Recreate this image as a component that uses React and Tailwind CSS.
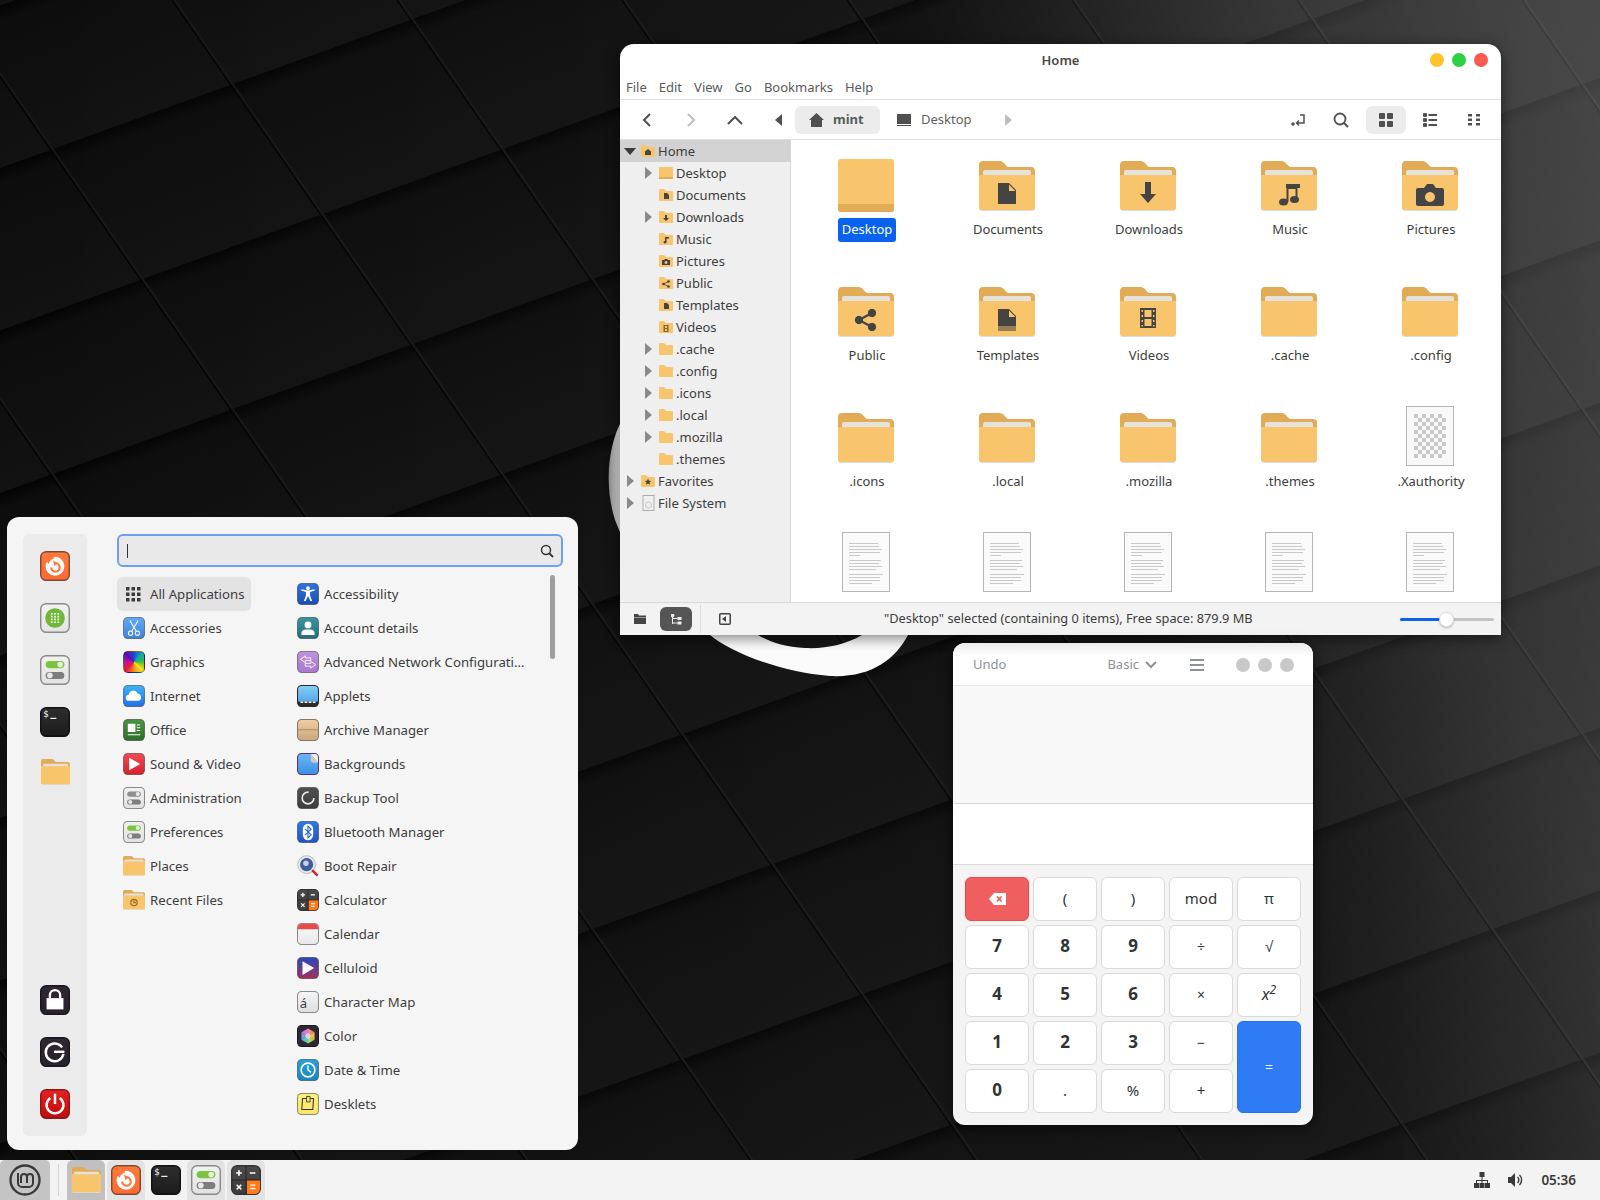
import React, { useId } from 'react';

const Tile = ({ s = 22, a, b, line = '#00000066', children }) => {
    const id = 'g' + useId().replace(/[^a-zA-Z0-9]/g, '');
    return (
        <svg width={s} height={s} viewBox="0 0 32 32" className="shrink-0">
            <defs>
                <linearGradient id={id} x1="0" y1="0" x2="0" y2="1">
                    <stop offset="0" stopColor={a} />
                    <stop offset="1" stopColor={b || a} />
                </linearGradient>
            </defs>
            <rect x="0.75" y="0.75" width="30.5" height="30.5" rx="6" fill={`url(#${id})`} stroke={line} strokeWidth="1.5" />
            {children}
        </svg>
    );
};

const FirefoxIcon = ({ s }) => (
    <Tile s={s} a="#ff7a3c" b="#ff6a30" line="#7a4a38">
        <path d="M16 6c5 0 10 4 10 10.500a10 10 0 1 1-20 0c0-2 .6-3.800 1.600-5.300.2 1.300.8 2.100 1.600 2.500C10 10 12.500 8.500 15 8.500c-1-.8-1-1.800 1-2.500z" fill="#fff" />
        <path d="M12 17.500a4.500 4.500 0 1 0 4.500-4.500" fill="none" stroke="#ff7a3c" strokeWidth="2.400" />
        <path d="M14 10l5 3-4 3z" fill="#ff7a3c" />
    </Tile>
);
const SoftwareIcon = ({ s }) => (
    <Tile s={s} a="#f2f2f2" b="#e4e4e4" line="#8a8a8a">
        <circle cx="16" cy="16" r="10.500" fill="#6fb83a" />
        {[11.500, 14.500, 17.500, 20.500].map((y) => [12.500, 16, 19.500].map((x) => <rect key={`${x}-${y}`} x={x - 0.9} y={y - 0.9} width="1.800" height="1.800" fill="#fff" />))}
    </Tile>
);
const ToggleIcon = ({ s, on = true }) => (
    <Tile s={s} a="#f2f2f2" b="#e2e2e2" line="#8a8a8a">
        <rect x="6" y="6.500" width="20" height="7.500" rx="3.750" fill={on ? '#7cc43f' : '#8f8f8f'} />
        <circle cx="21.500" cy="10.250" r="3" fill={on ? '#e4f5d4' : '#e8e8e8'} />
        <rect x="6" y="18" width="20" height="7.500" rx="3.750" fill="#7d7d7d" />
        <circle cx="10.500" cy="21.750" r="3" fill="#e8e8e8" />
    </Tile>
);
const TerminalIcon = ({ s }) => (
    <Tile s={s} a="#2e2e2e" b="#1c1c1c" line="#111">
        <text x="3.500" y="11" fontSize="9.500" fill="#fff" fontFamily="'DejaVu Sans Mono', monospace">$</text>
        <rect x="11" y="11.500" width="6.500" height="1.200" fill="#fff" />
    </Tile>
);
const LockIcon = ({ s }) => (
    <Tile s={s} a="#2e2833" b="#27222b" line="#1a171c">
        <rect x="7" y="14" width="18" height="12" fill="#fff" />
        <path d="M10.500 14v-3a5.500 5.500 0 0 1 11 0v3" fill="none" stroke="#fff" strokeWidth="2.400" />
    </Tile>
);
const LogoutIcon = ({ s }) => (
    <Tile s={s} a="#2e2833" b="#27222b" line="#1a171c">
        <path d="M23.500 11a9.500 9.500 0 1 0 1.500 7" fill="none" stroke="#fff" strokeWidth="2.600" />
        <rect x="15" y="14.500" width="11" height="2.600" fill="#fff" />
    </Tile>
);
const PowerIcon = ({ s }) => (
    <Tile s={s} a="#e62222" b="#bd0c0c" line="#8a1a1a">
        <path d="M11 9.500a9 9 0 1 0 10 0" fill="none" stroke="#fff" strokeWidth="2.600" />
        <rect x="14.700" y="5" width="2.600" height="11" fill="#fff" />
    </Tile>
);
const CalcIcon = ({ s }) => (
    <Tile s={s} a="#4a4a4a" b="#3c3c3c" line="#333">
        <path d="M31 16H17v15h8a6 6 0 0 0 6-6z" fill="#ff7a1c" />
        <path d="M16 1v30M1 16h30" stroke="#222" strokeWidth="1" />
        <path d="M5.500 8.500h6M8.500 5.500v6M20 8.500h6" stroke="#fff" strokeWidth="1.800" />
        <path d="M6 21l5 5M11 21l-5 5" stroke="#fff" strokeWidth="1.600" />
        <path d="M20.500 21.500h5.500M20.500 25h5.500" stroke="#fff" strokeWidth="1.500" />
    </Tile>
);
const GraphicsIcon = () => (
    <span className="w-[22px] h-[22px] shrink-0 rounded-[5px] border border-[#00000066] bg-[conic-gradient(#1a46d8,#10a8b0,#38c038,#f4e420,#f58a20,#e61e3c,#c80fa0,#5a10b0,#1a46d8)]" />
);
const ColorIcon = () => {
    const colors = ['#f58a7a', '#f5b84a', '#a8d860', '#60c8c0', '#7a98e8', '#d878d8'];
    return (
        <Tile a="#2e2833" line="#1a171c">
            {colors.map((c, i) => {
                const a0 = (i * Math.PI) / 3 - Math.PI / 2;
                const a1 = a0 + Math.PI / 3;
                return <path key={c} d={`M16 16L${16 + 11 * Math.cos(a0)} ${16 + 11 * Math.sin(a0)}L${16 + 11 * Math.cos(a1)} ${16 + 11 * Math.sin(a1)}Z`} fill={c} />;
            })}
            <circle cx="16" cy="16" r="4" fill="#f3e8f0" opacity="0.7" />
        </Tile>
    );
};

const FolderShape = ({ w = 56, children }) => (
    <svg width={w} height={w * (50 / 56)} viewBox="0 0 56 50" className="shrink-0">
        <path d="M0 4a4 4 0 0 1 4-4h17c3 0 5 4 8 6h23a4 4 0 0 1 4 4v20H0z" fill="#e2ab55" />
        <rect x="4" y="9" width="48" height="12" rx="2" fill="#e5e2dc" />
        <path d="M0 16a2 2 0 0 1 2-2h52a2 2 0 0 1 2 2v31a3 3 0 0 1-3 3H3a3 3 0 0 1-3-3z" fill="#dcdcdc" />
        <path d="M0 16a2 2 0 0 1 2-2h52a2 2 0 0 1 2 2v30a3 3 0 0 1-3 3H3a3 3 0 0 1-3-3z" fill="#f8c46c" />
        {children}
    </svg>
);

const Glyphs = {
    doc: <path d="M19 22h11l7 7v14H19z M30 23.500V30h6.500z" fill="#444" fillRule="evenodd" />,
    template: (
        <g>
            <path d="M19 22h11l7 7v10H19z M30 23.500V30h6.500z" fill="#444" fillRule="evenodd" />
            <path d="M19 39h18v5H19z" fill="#444" opacity="0.55" />
        </g>
    ),
    down: <path d="M25 21h6v12h5l-8 9-8-9h5z" fill="#444" />,
    music: (
        <g fill="#444">
            <path d="M25.500 24h13v2h-2v13h-2V28h-7v13h-2z" />
            <ellipse cx="22.500" cy="41" rx="4.500" ry="3.500" />
            <ellipse cx="33.500" cy="38.500" rx="4.500" ry="3.500" />
            <rect x="25" y="23" width="14" height="4" />
        </g>
    ),
    camera: <path d="M16 27h6l3-4h6l3 4h6a2 2 0 0 1 2 2v14a2 2 0 0 1-2 2H16a2 2 0 0 1-2-2V29a2 2 0 0 1 2-2z M28 31a5 5 0 1 0 .01 0z" fill="#444" fillRule="evenodd" />,
    share: (
        <g fill="#444" stroke="#444">
            <circle cx="21" cy="33" r="3.700" />
            <circle cx="34" cy="26" r="3.700" />
            <circle cx="34" cy="40" r="3.700" />
            <path d="M21 33l13-7M21 33l13 7" strokeWidth="2.200" />
        </g>
    ),
    film: <path d="M20 25h16v20H20z M21.500 27v2h1.500v-2z M21.500 32v2h1.500v-2z M21.500 37v2h1.500v-2z M21.500 42v1.500h1.500V42z M33 27v2h1.500v-2z M33 32v2h1.500v-2z M33 37v2h1.500v-2z M33 42v1.500h1.500V42z M24.500 27v7h7v-7z M24.500 36v7h7v-7z" fill="#444" fillRule="evenodd" transform="translate(0 -4)" />,
};

const DocIcon = () => {
    const rows = [[11, 29], [14, 30], [17, 33], [20, 31], [23, 11], [28, 32], [31, 30], [34, 33], [37, 27], [42, 34], [45, 31], [48, 31], [51, 23]];
    return (
        <svg width="48" height="60" viewBox="0 0 48 60" className="shrink-0">
            <rect x="0.500" y="0.500" width="47" height="59" fill="#fafafa" stroke="#b5b5b5" />
            {rows.map(([y, w]) => <rect key={y} x="7" y={y} width={w} height="0.700" fill="#b4b4b4" />)}
        </svg>
    );
};

const CheckerIcon = () => {
    const cells = [];
    for (let r = 0; r < 11; r++) for (let c = 0; c < 8; c++) if ((r + c) % 2 === 0) cells.push(<rect key={`${r}-${c}`} x={8 + c * 4} y={8 + r * 4} width="4" height="4" fill="#c8c8c8" />);
    return (
        <svg width="48" height="60" viewBox="0 0 48 60" className="shrink-0">
            <rect x="0.500" y="0.500" width="47" height="59" fill="#f8f8f8" stroke="#b5b5b5" />
            {cells}
        </svg>
    );
};

const categories = [
    ['Accessories', <Tile a="#62aaf2" b="#3f82de"><g fill="none" stroke="#fff" strokeWidth="1.500"><circle cx="11" cy="23.500" r="3" /><circle cx="21" cy="23.500" r="3" /><path d="M12.500 21L22 5M19.500 21L10 5" /></g></Tile>],
    ['Graphics', <GraphicsIcon />],
    ['Internet', <Tile a="#3cb4f5" b="#2070e8"><path d="M9 23a4.500 4.500 0 0 1-.6-9 6.500 6.500 0 0 1 12.600-1.500A5.500 5.500 0 0 1 23 23z" fill="#fff" /></Tile>],
    ['Office', <Tile a="#4a9440" b="#2f6e2a"><path d="M7 7h11v12H7z M20 8h5v1.500h-5z M20 12h5v1.500h-5z M20 16h5v1.500h-5z M7 22h18v1.500H7z" fill="#fff" /></Tile>],
    ['Sound & Video', <Tile a="#f24a52" b="#d8202e"><path d="M9 7l16 9-16 9z" fill="#fff" /></Tile>],
    ['Administration', <ToggleIcon s={22} on={false} />],
    ['Preferences', <ToggleIcon s={22} />],
    ['Places', <FolderShape w={22} />],
    ['Recent Files', <FolderShape w={22}><circle cx="28" cy="32" r="8" fill="none" stroke="#9a6b20" strokeWidth="3" /><path d="M28 27v5h5" fill="none" stroke="#9a6b20" strokeWidth="3" /></FolderShape>],
];

const apps = [
    ['Accessibility', <Tile a="#2f74dc" b="#1c4eb4"><circle cx="16" cy="7.500" r="2.700" fill="#fff" /><path d="M6 11l7 2v5l-3 8h2.500l3.500-7 3.500 7H22l-3-8v-5l7-2-.6-1.800L16 11 6.600 9.200z" fill="#fff" /></Tile>],
    ['Account details', <Tile a="#3a94a0" b="#256f80"><circle cx="16" cy="11.500" r="5" fill="#fff" /><path d="M6.500 26v-3c0-3 3-5 6-5h7c3 0 6 2 6 5v3z" fill="#fff" /></Tile>],
    ['Advanced Network Configurati…', <Tile a="#bd94de" b="#a878cc"><path d="M12 7l-7 5 7 5v-3h8v-4h-8z M20 15l7 5-7 5v-3h-8v-4h8z" fill="none" stroke="#fff" strokeWidth="1.300" /></Tile>],
    ['Applets', <Tile a="#84d0f2" b="#4a9ce8" line="#2a2a2a"><path d="M.75 24h30.500v1.250a6 6 0 0 1-6 6H6.750a6 6 0 0 1-6-6z" fill="#2a2a2a" /><path d="M5 24h4v2H5z M11 24h4v2h-4z M17 24h4v2h-4z M23 24h4v2h-4z" fill="#fff" /></Tile>],
    ['Archive Manager', <Tile a="#efcea0" b="#c9a67e" line="#8a7660"><rect x="1" y="15" width="30" height="1.300" fill="#a48760" /></Tile>],
    ['Backgrounds', <Tile a="#6db6f6" b="#3b8ee8" line="#5a2f78"><path d="M20 1.500h6a5 5 0 0 1 4.500 4.500v8z" fill="#f3efe9" /><path d="M20 1.500L30.500 14H24a4 4 0 0 1-4-4z" fill="#cfcac4" /></Tile>],
    ['Backup Tool', <Tile a="#505050" b="#3c3c3c"><circle cx="16" cy="16" r="8.500" fill="none" stroke="#e8e8e8" strokeWidth="2.400" strokeDasharray="40 14" /></Tile>],
    ['Bluetooth Manager', <Tile a="#2f78e6" b="#1f56c4"><rect x="8.500" y="4" width="15" height="24" rx="7.500" fill="#fff" /><path d="M11.500 11.500l9 8.500-4.500 4.500V7.500l4.500 4.500-9 8.500" fill="none" stroke="#2463d2" strokeWidth="1.600" /></Tile>],
    ['Boot Repair', <svg width="22" height="22" viewBox="0 0 32 32" className="shrink-0"><circle cx="14" cy="14" r="13" fill="#e6e6e6" stroke="#aaa" /><circle cx="14" cy="14" r="9.500" fill="#3a5fa0" /><circle cx="13" cy="12" r="4" fill="#c9d2de" /><path d="M22 22l8 8" stroke="#c8262a" strokeWidth="3.500" /></svg>],
    ['Calculator', <CalcIcon s={22} />],
    ['Calendar', <Tile a="#fafafa" b="#e8e8e8" line="#8a8a8a"><path d="M1.500 9V6.500a5 5 0 0 1 5-5h19a5 5 0 0 1 5 5V9z" fill="#ea4a42" /></Tile>],
    ['Celluloid', <Tile a="#2748bc" b="#a2305e"><path d="M8 6l17 10-17 10z" fill="#fff" /></Tile>],
    ['Character Map', <Tile a="#f6f6f6" b="#dedede" line="#8a8a8a"><text x="4" y="25" fontSize="19" fill="#444" fontFamily="'Noto Sans', sans-serif">á</text></Tile>],
    ['Color', <ColorIcon />],
    ['Date & Time', <Tile a="#27a2d8" b="#1786bc"><circle cx="16" cy="16" r="10" fill="none" stroke="#fff" strokeWidth="2.400" /><path d="M16 9.500V16l4.500 3.500" fill="none" stroke="#fff" strokeWidth="2" /></Tile>],
    ['Desklets', <Tile a="#fdf07a" b="#fbe668" line="#8a8a6a"><path d="M8 8h16l-1 16H7z" fill="none" stroke="#333" strokeWidth="1.500" /><path d="M14 5h5v8h-5z" fill="#fdf07a" stroke="#333" strokeWidth="1.300" /></Tile>],
];

const MiniFolder = ({ glyph, plain }) => (
    <svg width="14" height="12" viewBox="0 0 14 12" className="shrink-0">
        {plain ? <rect x="0" y="0" width="14" height="12" rx="1" fill="#f8c46c" /> : <path d="M0 1a1 1 0 0 1 1-1h4l2 2h6a1 1 0 0 1 1 1v8a1 1 0 0 1-1 1H1a1 1 0 0 1-1-1z" fill="#f8c46c" />}
        {plain && <rect x="0" y="10" width="14" height="2" fill="#e2ab55" />}
        {glyph}
    </svg>
);

const mini = {
    home: <path d="M7 4l3.500 3H10v3H4V7h-.5z" fill="#444" />,
    doc: <path d="M5 4h3l2 2v4H5z" fill="#444" />,
    down: <path d="M6 4h2v3h2l-3 3-3-3h2z" fill="#444" />,
    music: <path d="M6 4h4v1.500H7.500V9a1.500 1.200 0 1 1-1.500-1z" fill="#444" />,
    camera: <path d="M3 5h2l1-1h2l1 1h2v5H3z M7 6a1.500 1.500 0 1 0 .01 0z" fill="#444" fillRule="evenodd" />,
    share: (
        <g fill="#444">
            <circle cx="4.500" cy="7" r="1.300" />
            <circle cx="9.500" cy="4.500" r="1.300" />
            <circle cx="9.500" cy="9.500" r="1.300" />
            <path d="M4.500 7l5-2.500M4.500 7l5 2.500" stroke="#444" strokeWidth="0.800" />
        </g>
    ),
    film: <path d="M4.500 4h5v7h-5z M6 5v2h2V5z M6 8v2h2V8z" fill="#8a6a30" fillRule="evenodd" />,
    star: <path d="M7 3.500l1 2.200 2.300.2-1.800 1.500.6 2.300L7 8.500l-2.100 1.200.6-2.300L3.700 5.900 6 5.700z" fill="#444" />,
};

const tree = [
    ['Home', 0, 'down', mini.home, true],
    ['Desktop', 1, 'right', null, false, true],
    ['Documents', 1, null, mini.doc],
    ['Downloads', 1, 'right', mini.down],
    ['Music', 1, null, mini.music],
    ['Pictures', 1, null, mini.camera],
    ['Public', 1, null, mini.share],
    ['Templates', 1, null, mini.doc],
    ['Videos', 1, null, mini.film],
    ['.cache', 1, 'right'],
    ['.config', 1, 'right'],
    ['.icons', 1, 'right'],
    ['.local', 1, 'right'],
    ['.mozilla', 1, 'right'],
    ['.themes', 1, null],
    ['Favorites', 0, 'right', mini.star],
    ['File System', 0, 'right', 'disk'],
];

const fileIcons = [
    ['Desktop', 'desk'], ['Documents', 'doc'], ['Downloads', 'down'], ['Music', 'music'], ['Pictures', 'camera'],
    ['Public', 'share'], ['Templates', 'template'], ['Videos', 'film'], ['.cache'], ['.config'],
    ['.icons'], ['.local'], ['.mozilla'], ['.themes'], ['.Xauthority', 'checker'],
    ['', 'file'], ['', 'file'], ['', 'file'], ['', 'file'], ['', 'file'],
];

const DeskFolder = () => (
    <svg width="56" height="54" viewBox="0 0 56 54" className="shrink-0">
        <rect width="56" height="53" rx="3" fill="#f8c46c" />
        <path d="M0 45h56v5a3 3 0 0 1-3 3H3a3 3 0 0 1-3-3z" fill="#e2ab55" />
    </svg>
);

const Wallpaper = () => (
    <svg className="absolute inset-0" width="1600" height="1200" viewBox="0 0 1600 1200">
        <defs>
            <linearGradient id="tileShade" x1="0" y1="0" x2="0" y2="1">
                <stop offset="0" stopColor="#040404" />
                <stop offset="0.100" stopColor="#0d0d0d" />
                <stop offset="1" stopColor="#121212" />
            </linearGradient>
            <pattern id="tiles" width="100" height="100" patternUnits="userSpaceOnUse" patternTransform="matrix(1.800 -0.650 0.900 1.300 -40 20)">
                <rect width="100" height="100" fill="url(#tileShade)" />
                <path d="M0 0v100" stroke="#000" strokeWidth="1.500" />
                <path d="M1.500 0v100" stroke="#181818" strokeWidth="1" />
            </pattern>
            <linearGradient id="sideGlow" x1="0" y1="0" x2="1" y2="0">
                <stop offset="0" stopColor="#fff" stopOpacity="0" />
                <stop offset="0.500" stopColor="#fff" stopOpacity="0.020" />
                <stop offset="1" stopColor="#fff" stopOpacity="0.040" />
            </linearGradient>
            <linearGradient id="topGlow" gradientUnits="userSpaceOnUse" x1="1560" y1="0" x2="1000" y2="220">
                <stop offset="0" stopColor="#fff" stopOpacity="0.200" />
                <stop offset="0.500" stopColor="#fff" stopOpacity="0.120" />
                <stop offset="0.850" stopColor="#fff" stopOpacity="0.030" />
                <stop offset="1" stopColor="#fff" stopOpacity="0" />
            </linearGradient>
            <linearGradient id="edge" x1="0" y1="0" x2="1" y2="0">
                <stop offset="0" stopColor="#8a8a8a" />
                <stop offset="1" stopColor="#f4f4f4" />
            </linearGradient>
        </defs>
        <rect width="1600" height="1200" fill="url(#tiles)" />
        <rect width="1600" height="1200" fill="url(#sideGlow)" />
        <rect width="1600" height="1200" fill="url(#topGlow)" />
        <path d="M622 420C608 445 604 485 615 520L622 537z" fill="url(#edge)" />
        <path d="M710 635C730 652 780 672 830 676C870 678 895 660 908 635L862 635C845 645 825 649 805 648C785 647 770 642 758 635z" fill="#fbfbfb" />
    </svg>
);

const PanelBtn = ({ bg, children }) => (
    <div className={`w-[38px] h-10 flex items-center justify-center rounded-t-[6px] ${bg}`}>{children}</div>
);

const NavTri = ({ left, color = '#555' }) => (
    <svg width="7" height="12" viewBox="0 0 7 12" className="shrink-0">
        <path d={left ? 'M7 0v12L0 6z' : 'M0 0v12l7-6z'} fill={color} />
    </svg>
);

const Dot = ({ c }) => <span className={`w-[14px] h-[14px] rounded-full ${c}`} />;

const FileManager = () => (
    <div className="absolute left-[620px] top-[44px] w-[881px] h-[591px] rounded-t-[14px] bg-white flex flex-col overflow-hidden text-[#3d3d3d] shadow-[0_3px_14px_rgba(0,0,0,0.5)]">
        <div className="relative h-[32px] flex items-center justify-center shrink-0 pt-[1px]">
            <span className="font-semibold text-[13px] text-[#4a4a4a]">Home</span>
            <div className="absolute right-[13px] top-[9px] flex gap-[8px]">
                <Dot c="bg-[#fcc62a]" /><Dot c="bg-[#2cd144]" /><Dot c="bg-[#fa5a50]" />
            </div>
        </div>
        <div className="h-[24px] flex items-center gap-[12px] pl-[6px] border-b border-[#e0e0e0] shrink-0 text-[13px] text-[#5a5a5a]">
            <span>File</span><span>Edit</span><span>View</span><span>Go</span><span>Bookmarks</span><span>Help</span>
        </div>
        <div className="h-[40px] flex items-center border-b border-[#e0e0e0] shrink-0 text-[#5a5a5a]">
            <svg width="14" height="16" viewBox="0 0 14 16" className="ml-[20px]"><path d="M10 2L4 8l6 6" fill="none" stroke="#505050" strokeWidth="2" /></svg>
            <svg width="14" height="16" viewBox="0 0 14 16" className="ml-[30px]"><path d="M4 2l6 6-6 6" fill="none" stroke="#bdbdbd" strokeWidth="2" /></svg>
            <svg width="16" height="12" viewBox="0 0 16 12" className="ml-[29px]"><path d="M1 10l7-7 7 7" fill="none" stroke="#505050" strokeWidth="2" /></svg>
            <span className="ml-[32px]"><NavTri left color="#505050" /></span>
            <div className="ml-[13px] w-[85px] h-[28px] rounded-[6px] bg-[#ececec] flex items-center pl-[14px] gap-[9px]">
                <svg width="15" height="14" viewBox="0 0 15 14"><path d="M7.500 0L15 7h-2v7H2V7H0z" fill="#505050" /></svg>
                <span className="font-bold text-[13px] text-[#5a5a5a]">mint</span>
            </div>
            <svg width="14" height="12" viewBox="0 0 14 12" className="ml-[17px]"><rect width="14" height="10" fill="#505050" /><rect y="11" width="14" height="1" fill="#505050" /></svg>
            <span className="ml-[10px] text-[13px] text-[#5f5f5f]">Desktop</span>
            <span className="ml-[33px]"><NavTri color="#bdbdbd" /></span>
            <div className="ml-auto flex items-center">
                <svg width="16" height="16" viewBox="0 0 16 16"><circle cx="3" cy="12" r="1.800" fill="#505050" /><path d="M10 3h4v8H7M9 8.500L6.500 11 9 13.500" fill="none" stroke="#505050" strokeWidth="1.500" /></svg>
                <svg width="16" height="16" viewBox="0 0 16 16" className="ml-[27px]"><circle cx="7" cy="7" r="5.500" fill="none" stroke="#505050" strokeWidth="1.800" /><path d="M11 11l4 4" stroke="#505050" strokeWidth="2" /></svg>
                <div className="ml-[17px] w-[40px] h-[28px] rounded-[6px] bg-[#ececec] flex items-center justify-center">
                    <svg width="14" height="14" viewBox="0 0 14 14" fill="#505050"><rect width="6" height="6" rx="1" /><rect x="8" width="6" height="6" rx="1" /><rect y="8" width="6" height="6" rx="1" /><rect x="8" y="8" width="6" height="6" rx="1" /></svg>
                </div>
                <svg width="14" height="14" viewBox="0 0 14 14" fill="#505050" className="ml-[17px]"><rect width="4" height="4" rx="1" /><rect x="5.500" y="1" width="8.500" height="2" /><rect y="5" width="4" height="4" rx="1" /><rect x="5.500" y="6" width="8.500" height="2" /><rect y="10" width="4" height="4" rx="1" /><rect x="5.500" y="11" width="8.500" height="2" /></svg>
                <svg width="12" height="12" viewBox="0 0 12 12" fill="#505050" className="ml-[31px] mr-[21px]"><rect width="4" height="2.500" /><rect x="8" width="4" height="2.500" /><rect y="4.500" width="4" height="2.500" /><rect x="8" y="4.500" width="4" height="2.500" /><rect y="9" width="4" height="2.500" /><rect x="8" y="9" width="4" height="2.500" /></svg>
            </div>
        </div>
        <div className="flex-1 min-h-0 flex">
            <div className="w-[171px] shrink-0 bg-[#efefef] border-r border-[#d8d8d8] text-[13px] text-[#3d3d3d]">
                {tree.map(([name, depth, arrow, glyph, sel, desk]) => (
                    <div key={name} className={`h-[22px] flex items-center ${sel ? 'bg-[#d2d2d2]' : ''}`}>
                        <span className={`${depth ? 'w-[39px] pl-[25px]' : 'w-[21px] pl-[4px]'} shrink-0 flex`}>
                            {arrow === 'down' && <svg width="12" height="7" viewBox="0 0 12 7"><path d="M0 0h12L6 7z" fill="#3a3a3a" /></svg>}
                            {arrow === 'right' && <span className={depth ? '' : 'pl-[3px]'}><NavTri color="#8a8a8a" /></span>}
                        </span>
                        {glyph === 'disk' ? (
                            <svg width="13" height="16" viewBox="0 0 12 16" className="shrink-0 ml-[1px]"><rect x="0.500" y="0.500" width="11" height="15" fill="#efefef" stroke="#aeaeae" /><circle cx="6" cy="10" r="3" fill="none" stroke="#c8c8c8" /></svg>
                        ) : <MiniFolder glyph={glyph} plain={desk} />}
                        <span className="ml-[3px] pt-[2px]">{name}</span>
                    </div>
                ))}
            </div>
            <div className="flex-1 min-w-0 overflow-hidden bg-white pl-[4px] pt-[14px] grid grid-cols-[repeat(5,141px)] auto-rows-[126px]">
                {fileIcons.map(([name, kind], i) => (
                    <div key={i} className="flex flex-col items-center">
                        <div className="h-[60px] flex items-center justify-center">
                            {kind === 'desk' && <span className="mt-[4px]"><DeskFolder /></span>}
                            {kind === 'checker' && <CheckerIcon />}
                            {kind === 'file' && <DocIcon />}
                            {kind !== 'desk' && kind !== 'checker' && kind !== 'file' && <span className="mt-[4px]"><FolderShape>{Glyphs[kind]}</FolderShape></span>}
                        </div>
                        {name && (
                            <span className={`mt-[4px] ml-[3px] h-[24px] px-[4px] leading-[23px] rounded-[3px] text-[13px] ${kind === 'desk' ? 'bg-[#0a63ee] text-white' : 'text-[#3d3d3d]'}`}>{name}</span>
                        )}
                    </div>
                ))}
            </div>
        </div>
        <div className="h-[33px] shrink-0 bg-[#f3f3f3] border-t border-[#d8d8d8] flex items-center relative text-[12.800px] text-[#3d3d3d]">
            <svg width="12" height="10" viewBox="0 0 12 10" className="ml-[14px]"><path d="M0 0h4l1 1.500h7V3H0z M0 3.500h12V10H0z" fill="#444" /></svg>
            <div className="ml-[14px] w-[32px] h-[24px] rounded-[6px] bg-[#555] flex items-center justify-center">
                <svg width="11" height="11" viewBox="0 0 11 11" fill="none" stroke="#eee"><path d="M1.500 0v10M1.500 4.500h5M1.500 9h5" /><rect x="7" y="3.500" width="3" height="2" fill="#eee" /><rect x="7" y="8" width="3" height="2" fill="#eee" /><circle cx="1.500" cy="1.500" r="1.500" fill="#eee" /></svg>
            </div>
            <span className="ml-[8px] w-px h-[28px] bg-[#dcdcdc]" />
            <svg width="12" height="12" viewBox="0 0 12 12" className="ml-[18px]"><rect x="0.750" y="0.750" width="10.500" height="10.500" rx="1" fill="none" stroke="#444" strokeWidth="1.500" /><path d="M7 3v6L3 6z" fill="#444" /></svg>
            <span className="absolute left-[264px]">"Desktop" selected (containing 0 items), Free space: 879.9 MB</span>
            <div className="ml-auto mr-[7px] w-[94px] h-[3px] rounded-full bg-[#c4c4c4] relative">
                <div className="w-[46px] h-[3px] rounded-full bg-[#0a63ee]" />
                <div className="absolute left-[39px] top-[-6px] w-[15px] h-[15px] rounded-full bg-white border border-[#ddd] shadow-[0_1px_2px_rgba(0,0,0,0.25)]" />
            </div>
        </div>
    </div>
);

const keys = [
    ['(', ''], [')', ''], ['mod', ''], ['π', ''],
    ['7', 'd'], ['8', 'd'], ['9', 'd'], ['÷', 's'], ['√', ''],
    ['4', 'd'], ['5', 'd'], ['6', 'd'], ['×', 's'], ['x2', 'sq'],
    ['1', 'd'], ['2', 'd'], ['3', 'd'], ['−', 's'], ['=', 'eq'],
    ['0', 'd'], ['.', ''], ['%', ''], ['+', ''],
];

const Calculator = () => (
    <div className="absolute left-[953px] top-[643px] w-[360px] h-[482px] rounded-[12px] overflow-hidden flex flex-col bg-[#f4f4f4] shadow-[0_3px_14px_rgba(0,0,0,0.5)]">
        <div className="h-[43px] shrink-0 pt-[1px] bg-gradient-to-b from-[#ebebeb] to-white to-[30%] border-b border-[#e8e8e8] flex items-center text-[13px] text-[#8e9294]">
            <span className="ml-[20px]">Undo</span>
            <span className="ml-[101px]">Basic</span>
            <svg width="12" height="8" viewBox="0 0 12 8" className="ml-[6px]"><path d="M1 1l5 5 5-5" fill="none" stroke="#8e9294" strokeWidth="2" /></svg>
            <svg width="14" height="12" viewBox="0 0 14 12" className="ml-[33px]"><path d="M0 1h14M0 6h14M0 11h14" stroke="#8e9294" strokeWidth="2" /></svg>
            <div className="ml-auto mr-[19px] flex gap-[8px]">
                <Dot c="bg-[#c8c8c8]" /><Dot c="bg-[#c8c8c8]" /><Dot c="bg-[#c8c8c8]" />
            </div>
        </div>
        <div className="h-[118px] shrink-0 bg-[#f8f8f8] border-b border-[#d8d8d8]" />
        <div className="h-[61px] shrink-0 bg-white border-b border-[#dcdcdc]" />
        <div className="flex-1 px-[12px] pt-[12px] grid grid-cols-[repeat(5,64px)] auto-rows-[44px] gap-[4px] text-[#2e3436]">
            <button className="rounded-[6px] bg-[#f05f5f] border border-[#ec4a4a] flex items-center justify-center">
                <svg width="17" height="12" viewBox="0 0 17 12"><path d="M5 0h12v12H5L0 6z" fill="#fff" /><path d="M8 3.500l4.500 5M12.500 3.500L8 8.500" stroke="#f05f5f" strokeWidth="1.800" /></svg>
            </button>
            {keys.map(([k, kind]) => (
                <button
                    key={k}
                    className={`rounded-[6px] border flex items-center justify-center pb-[2px] ${kind === 'eq' ? 'row-span-2 bg-[#2f7bf6] border-[#2a70e8] text-white text-[14px]' : 'bg-white border-[#dadada]'} ${kind === 'd' ? 'font-bold text-[17px]' : ''} ${kind === 's' ? 'text-[14px]' : ''} ${kind === '' ? 'text-[15px]' : ''}`}
                >
                    {kind === 'sq' ? <i className="text-[16px]">x<sup>2</sup></i> : k}
                </button>
            ))}
        </div>
    </div>
);

const AppMenu = () => (
    <div className="absolute left-[7px] top-[517px] w-[571px] h-[633px] rounded-[12px] bg-[#f5f5f5] flex text-[13.200px] text-[#3d3d3d]">
        <div className="ml-[16px] mt-[17px] w-[64px] h-[602px] rounded-[6px] bg-[#ebebeb] flex flex-col items-center pt-[17px] pb-[17px] shrink-0">
            <div className="flex flex-col gap-[22px] items-center">
                <FirefoxIcon s={30} />
                <SoftwareIcon s={30} />
                <ToggleIcon s={30} />
                <TerminalIcon s={30} />
                <FolderShape w={29} />
            </div>
            <div className="mt-auto flex flex-col gap-[22px]">
                <LockIcon s={30} />
                <LogoutIcon s={30} />
                <PowerIcon s={30} />
            </div>
        </div>
        <div className="flex-1 min-w-0 relative">
            <div className="ml-[30px] mt-[17px] w-[446px] h-[33px] rounded-[6px] border-2 border-[#6fa0ec] bg-[#e9e9e9] flex items-center">
                <span className="ml-[8px] w-px h-[14px] bg-[#333]" />
                <svg width="14" height="14" viewBox="0 0 14 14" className="ml-auto mr-[7px]"><circle cx="6" cy="6" r="4.500" fill="none" stroke="#333" strokeWidth="1.500" /><path d="M9.500 9.500L13 13" stroke="#333" strokeWidth="1.800" /></svg>
            </div>
            <div className="flex ml-[30px] mt-[10px]">
                <div className="w-[180px] shrink-0">
                    <div className="w-[134px] h-[34px] rounded-[6px] bg-[#e3e3e3] flex items-center pl-[9px] gap-[9px]">
                        <svg width="15" height="15" viewBox="0 0 15 15" fill="#3a3a3a" className="shrink-0">
                            {[0, 5.500, 11].map((y) => [0, 5.500, 11].map((x) => <rect key={`${x}-${y}`} x={x} y={y} width="3.500" height="3.500" />))}
                        </svg>
                        <span className="whitespace-nowrap pt-[2px]">All Applications</span>
                    </div>
                    {categories.map(([name, icon]) => (
                        <div key={name} className="h-[34px] flex items-center pl-[6px] gap-[5px]">
                            {icon}
                            <span className="pt-[2px]">{name}</span>
                        </div>
                    ))}
                </div>
                <div>
                    {apps.map(([name, icon]) => (
                        <div key={name} className="h-[34px] flex items-center gap-[5px]">
                            {icon}
                            <span className="whitespace-nowrap pt-[2px]">{name}</span>
                        </div>
                    ))}
                </div>
            </div>
            <div className="absolute left-[463px] top-[58px] w-[5px] h-[84px] rounded-full bg-[#9e9e9e]" />
        </div>
    </div>
);

const Panel = () => (
    <div className="absolute left-0 bottom-0 w-full h-10 bg-[#f3f3f3] flex items-center text-[#3a3a3a]">
        <div className="w-[50px] h-10 bg-[#c4c4c4] rounded-t-[5px] flex items-center justify-center">
            <svg width="34" height="34" viewBox="0 0 34 34" fill="none" stroke="#3a3a3a">
                <circle cx="17" cy="17" r="14.500" strokeWidth="2.400" />
                <path d="M10 10v10a4 4 0 0 0 4 4h7a4 4 0 0 0 4-4v-6a3 3 0 0 0-3-3 3 3 0 0 0-3 3v6M19 14a3 3 0 0 0-3-3 3 3 0 0 0-3 3v6" strokeWidth="2" />
            </svg>
        </div>
        <span className="ml-[8px] w-px h-[32px] bg-[#d4d4d4]" />
        <div className="ml-[8px] flex gap-[2px]">
            <PanelBtn bg="bg-[#c0c0c0]"><FolderShape w={29} /></PanelBtn>
            <PanelBtn bg="bg-[#e3e3e3]"><FirefoxIcon s={30} /></PanelBtn>
            <PanelBtn bg=""><TerminalIcon s={30} /></PanelBtn>
            <PanelBtn bg="bg-[#e3e3e3]"><ToggleIcon s={30} /></PanelBtn>
            <PanelBtn bg="bg-[#e3e3e3]"><CalcIcon s={30} /></PanelBtn>
        </div>
        <div className="ml-auto mr-[24px] flex items-center">
            <svg width="16" height="16" viewBox="0 0 16 16" fill="#3a3a3a"><rect x="5.500" y="0" width="5" height="5" /><rect x="0" y="11" width="5" height="5" /><rect x="5.500" y="11" width="5" height="5" /><rect x="11" y="11" width="5" height="5" /><path d="M7.500 5h1v3h5.500v3h-1V9H8.500v2h-1V9H3v2H2V8h5.500z" /></svg>
            <svg width="16" height="16" viewBox="0 0 16 16" className="ml-[18px]"><path d="M0 5h3l4-4v14l-4-4H0z" fill="#3a3a3a" /><path d="M9.500 5a4 4 0 0 1 0 6M11.500 3a7 7 0 0 1 0 10" fill="none" stroke="#3a3a3a" strokeWidth="1.400" /></svg>
            <span className="ml-[17px] text-[13.500px] font-semibold">05:36</span>
        </div>
    </div>
);

export default function App() {
    return (
        <div className="relative w-[1600px] h-[1200px] overflow-hidden bg-[#0e0e0e] font-['Noto_Sans',sans-serif]">
            <Wallpaper />
            <FileManager />
            <Calculator />
            <AppMenu />
            <Panel />
        </div>
    );
}
